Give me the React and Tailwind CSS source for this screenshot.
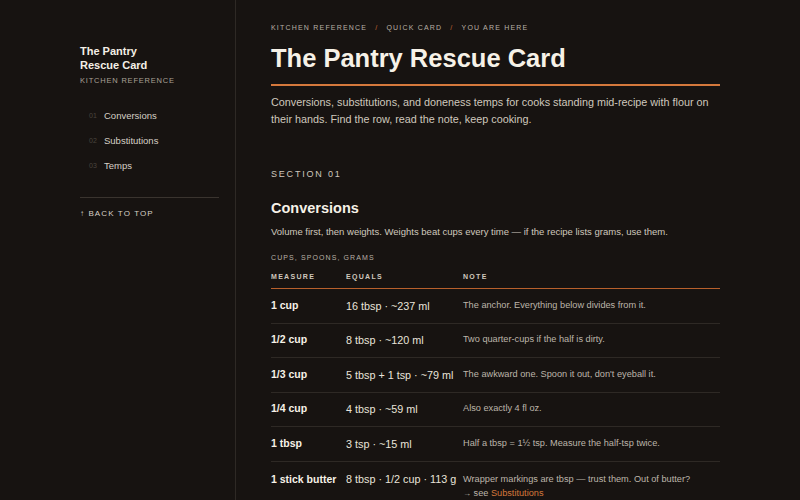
const nav = [
  ["01", "Conversions"],
  ["02", "Substitutions"],
  ["03", "Temps"],
];

const rows = [
  ["1 cup", "16 tbsp · ~237 ml", "The anchor. Everything below divides from it."],
  ["1/2 cup", "8 tbsp · ~120 ml", "Two quarter-cups if the half is dirty."],
  ["1/3 cup", "5 tbsp + 1 tsp · ~79 ml", "The awkward one. Spoon it out, don't eyeball it."],
  ["1/4 cup", "4 tbsp · ~59 ml", "Also exactly 4 fl oz."],
  ["1 tbsp", "3 tsp · ~15 ml", "Half a tbsp = 1½ tsp. Measure the half-tsp twice."],
];

function Sidebar() {
  return (
    <aside className="w-[236px] shrink-0 border-r border-[#2e2925] pl-[80px] pr-4 pt-[44px]">
      <div className="text-[11px] font-bold leading-[14px] text-[#f4efe6]">
        The Pantry
        <br />
        Rescue Card
      </div>
      <div className="mt-[4px] text-[7.5px] leading-[10px] tracking-[0.8px] text-[#a9a197]">KITCHEN REFERENCE</div>
      <nav className="mt-[18px] flex flex-col">
        {nav.map(([n, label]) => (
          <a key={n} href="#" className="flex h-[25px] items-center pl-[9px] text-[9.5px] text-[#d6d0c6]">
            <span className="w-[15px] text-[7px] text-[#4a443e]">{n}</span>
            {label}
          </a>
        ))}
      </nav>
      <hr className="mt-[18px] border-[#3a342f]" />
      <a href="#" className="mt-[10px] block text-[8px] leading-[12px] tracking-[1.1px] text-[#d6d0c6]">
        ↑ BACK TO TOP
      </a>
    </aside>
  );
}

export default function App() {
  return (
    <div
      className="flex h-[500px] w-[800px] overflow-hidden bg-[#171311] text-[#e9e3da]"
      style={{ fontFamily: '"Liberation Sans", Arial, sans-serif' }}
    >
      <Sidebar />
      <main className="w-[484px] pl-[35px] pt-[23px]">
        <div className="flex gap-[8px] text-[7px] leading-[10px] tracking-[1.2px] text-[#b8b0a5]">
          <span>KITCHEN REFERENCE</span>
          <span className="text-[#c86a34]">/</span>
          <span>QUICK CARD</span>
          <span className="text-[#c86a34]">/</span>
          <span>YOU ARE HERE</span>
        </div>
        <h1 className="mt-[10px] text-[25.5px] font-bold leading-[30px] text-[#f6f1e7]">The Pantry Rescue Card</h1>
        <div className="mt-[11px] h-[2px] bg-[#d4783c]" />
        <p className="mt-[8px] text-[10.8px] leading-[17px] text-[#cfc8bd]">
          Conversions, substitutions, and doneness temps for cooks standing mid-recipe with flour on their hands. Find the
          row, read the note, keep cooking.
        </p>

        <div className="mt-[40px] text-[9px] leading-[12px] tracking-[1.8px] text-[#cfc8bd]">SECTION 01</div>
        <h2 className="mt-[18px] text-[14.5px] font-bold leading-[20px] text-[#f6f1e7]">Conversions</h2>
        <p className="mt-[7px] text-[9.5px] leading-[14px] text-[#cfc8bd]">
          Volume first, then weights. Weights beat cups every time — if the recipe lists grams, use them.
        </p>
        <div className="mt-[13px] text-[7px] leading-[11px] tracking-[1.1px] text-[#b8b0a5]">CUPS, SPOONS, GRAMS</div>

        <div className="mt-[8px] grid grid-cols-[75px_117px_1fr] border-b border-[#b8602c] pb-[6px] text-[7px] font-bold leading-[11px] tracking-[1.3px] text-[#cfc8bd]">
          <span>MEASURE</span>
          <span>EQUALS</span>
          <span>NOTE</span>
        </div>

        {rows.map(([m, e, n]) => (
          <div
            key={m}
            className="grid h-[34.5px] grid-cols-[75px_117px_1fr] items-center border-b border-[#2e2925]"
          >
            <span className="text-[10.5px] font-bold text-[#f6f1e7]">{m}</span>
            <span className="text-[10.8px] text-[#e9e3da]">{e}</span>
            <span className="text-[9.2px] text-[#bdb5aa]">{n}</span>
          </div>
        ))}
        <div className="grid grid-cols-[75px_117px_1fr] pt-[10px] leading-[14px]">
          <span className="text-[10.5px] font-bold text-[#f6f1e7]">1 stick butter</span>
          <span className="text-[10.8px] text-[#e9e3da]">8 tbsp · 1/2 cup · 113 g</span>
          <span className="text-[9.2px] text-[#bdb5aa]">
            Wrapper markings are tbsp — trust them. Out of butter?
            <br />
            <span className="text-[8px]">→</span> see <a href="#" className="text-[#d4783c]">Substitutions</a>
          </span>
        </div>
      </main>
    </div>
  );
}
